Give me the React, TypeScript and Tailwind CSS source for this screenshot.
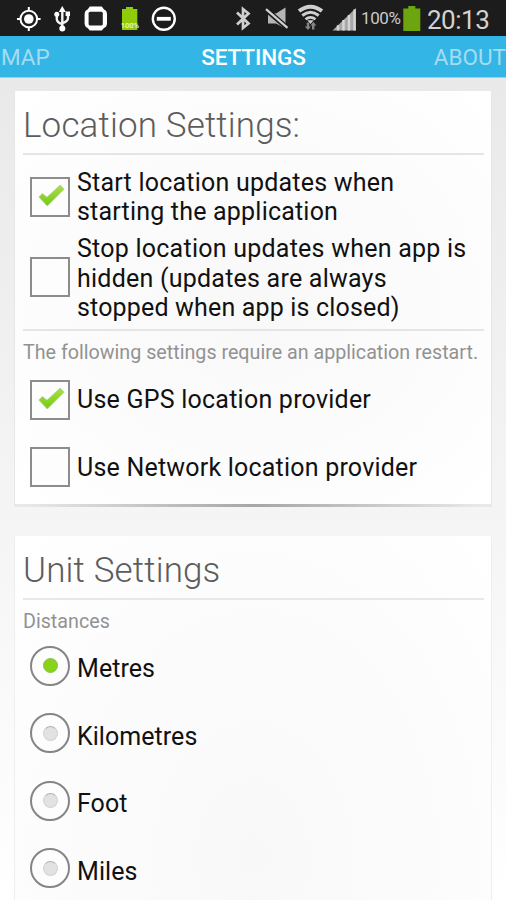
import { useState } from "react";
import clsx from "clsx";

const distances = ["Metres", "Kilometres", "Foot", "Miles"];

function NotificationIcons() {
  return (
    <div className="flex">
      {/* GPS */}
      <svg className="ml-[16px] h-9 w-[26px]" viewBox="16 0 26 36" fill="none" stroke="#fff">
        <circle cx="28.8" cy="19" r="8.3" strokeWidth="2" />
        <circle cx="28.8" cy="19" r="4.8" fill="#fff" stroke="none" />
        <path d="M28.8 7v4M28.8 27v4M17 19h4M36.6 19h4" strokeWidth="2" />
      </svg>
      {/* USB */}
      <svg className="ml-[11px] h-9 w-[19px]" viewBox="53 0 19 36" fill="none" stroke="#f4f4f4">
        <path d="M62.3 10v18M56.8 15v4.2q0 3 5.5 5M68 14v4.2q0 3-5.7 5" strokeWidth="2.4" />
        <path d="M62.3 6l3.5 6h-7z" fill="#fff" stroke="none" />
        <circle cx="56.8" cy="14.3" r="2.5" fill="#fff" stroke="none" />
        <path d="M65.6 11.5h4.400v4.500h-4.400z" fill="#fff" stroke="none" />
        <circle cx="62.3" cy="28.5" r="3" fill="#fff" stroke="none" />
      </svg>
      {/* Watch */}
      <svg className="ml-[11px] h-9 w-[26px]" viewBox="83 0 26 36">
        <path
          d="M89.8 6.500h12l2.200 3q3 1.200 3 5v8.500q0 3.800-3 5l-2.200 2.500h-12l-2.200-2.500q-3-1.200-3-5v-8.500q0-3.800 3-5z"
          fill="#fff"
        />
        <rect x="88.600" y="11.800" width="14.200" height="13.700" rx="1.500" fill="#222" />
      </svg>
      {/* Battery notification */}
      <svg className="ml-[11px] h-9 w-[20px]" viewBox="120 0 20 36">
        <path d="M122 9h4V7h7v2h4.3v21H122z" fill="#8fcb0b" />
        <text
          x="129.8"
          y="28.3"
          textAnchor="middle"
          fontFamily="Roboto, sans-serif"
          fontSize="7.4"
          fontWeight="700"
          fill="#e4f2c4"
        >
          100%
        </text>
      </svg>
      {/* Blocking mode */}
      <svg className="ml-[10px] h-9 w-[28px]" viewBox="150 0 28 36">
        <circle cx="163.8" cy="18.8" r="11" fill="none" stroke="#fff" strokeWidth="2.4" />
        <rect x="156.8" y="16.900" width="14" height="3.800" fill="#fff" />
      </svg>
    </div>
  );
}

function SystemIcons() {
  return (
    <div className="ml-auto flex">
      {/* Bluetooth */}
      <svg className="h-9 w-[18px]" viewBox="235 0 18 36" fill="none" stroke="#cfcfcf">
        <path d="M237 12.500l11.500 11-5.500 4.500V9l5.500 4.500L237 24.500" strokeWidth="2.700" />
      </svg>
      {/* Muted */}
      <svg className="ml-[12px] h-9 w-[26px]" viewBox="265 0 26 36">
        <path d="M268 13.500h8l9.500-6v21l-9.500-5H268z" fill="#b5b5b5" />
        <path d="M265.500 9l23 20" stroke="#1c1c1c" strokeWidth="5" />
        <path d="M266 9.200l21.500 18.600" stroke="#d0d0d0" strokeWidth="2.200" />
      </svg>
      {/* Wi-Fi */}
      <svg className="ml-[6px] h-9 w-[28px]" viewBox="297 0 28 36" fill="none" stroke="#cfcfcf">
        <path d="M299 11q11.500-8.500 23 0" strokeWidth="4" />
        <path d="M302.300 15.500q8.200-6.500 16.400 0" strokeWidth="3" />
        <path d="M305.500 19.300q5-4 10 0" strokeWidth="2.600" />
        <path d="M307.300 20.300h6.400l-3.200 3.600z" fill="#cfcfcf" stroke="none" />
        <path d="M308 22.500v6M313.200 29.500v-6" stroke="#858585" strokeWidth="2.400" />
        <path d="M304.800 26.500h6l-2.800 3.500zM310.400 25.500h6l-3-3.500z" fill="#858585" stroke="none" />
      </svg>
      {/* Signal */}
      <svg className="ml-[6px] h-9 w-[26px]" viewBox="331 0 26 36">
        <path d="M332.500 30.500L356 8v22.500z" fill="#a8a8a8" />
        <path d="M338 25.200v5.300M343.500 20v10.500M349 15v15.500M354.500 9.500v21" stroke="#d6d6d6" strokeWidth="2.400" />
      </svg>
      <span className="ml-[4px] w-[41px] text-[17px] leading-9 tracking-[-0.400px] text-[#c9c9c9]">100%</span>
      <svg className="ml-px h-9 w-[18px]" viewBox="403 0 18 36">
        <path d="M403.300 8.500h5V6h7v2.500h5V31h-17z" fill="#6da50e" />
      </svg>
      <span className="ml-[6px] w-[79px] pt-[2px] text-[26px] leading-9 tracking-[-0.500px] text-[#d2d2d2]">20:13</span>
    </div>
  );
}

function TabBar() {
  return (
    <nav className="grid h-[42px] grid-cols-3 border-b border-[#8fd3ee] bg-[#33b5e5] pt-px text-[22.500px] leading-[40px] text-[#a5dcf1]">
      <span className="pl-px">MAP</span>
      <span className="pl-px text-center font-medium tracking-[-0.100px] whitespace-nowrap text-white">SETTINGS</span>
      <span className="justify-self-end whitespace-nowrap">ABOUT</span>
    </nav>
  );
}

function Checkbox({ defaultChecked = false }) {
  const [checked, setChecked] = useState(defaultChecked);

  return (
    <button
      role="checkbox"
      aria-checked={checked}
      onClick={() => setChecked(!checked)}
      className="h-10 w-10 shrink-0 border-2 border-[#8c8c8c] bg-[#fdfdfd]"
    >
      {checked && (
        <svg className="h-9 w-9" viewBox="0 0 36 36">
          <defs>
            <linearGradient id="tick" x1="0" y1="0" x2="0" y2="1">
              <stop offset="0" stopColor="#aadf45" />
              <stop offset="1" stopColor="#73cb10" />
            </linearGradient>
          </defs>
          <path
            d="M6.800 18l3.600-3.500 4.600 3.700L28.200 6l3.900 4.200L15.300 27z"
            fill="url(#tick)"
            stroke="#b6c99a"
            strokeWidth=".8"
            strokeLinejoin="round"
          />
        </svg>
      )}
    </button>
  );
}

function Radio({ selected, onSelect }: { selected: boolean; onSelect: () => void }) {
  return (
    <button
      role="radio"
      aria-checked={selected}
      onClick={onSelect}
      className="flex h-10 w-10 shrink-0 items-center justify-center rounded-full border-2 border-[#858585] bg-[#fdfdfd]"
    >
      <span
        className={clsx(
          "h-[15px] w-[15px] rounded-full border",
          selected ? "border-[#8fbe4d] bg-[#86d318]" : "border-[#d3d3d3] border-t-[#b3b3b3] bg-[#e2e2e2]"
        )}
      />
    </button>
  );
}

export default function App() {
  const [unit, setUnit] = useState("Metres");

  return (
    <div className="flex h-[900px] w-[506px] flex-col overflow-hidden bg-linear-to-b from-[#e7e7e7] to-white font-['Roboto',sans-serif] text-[#111]">
      <header className="flex h-9 shrink-0 bg-[#1c1c1c]">
        <NotificationIcons />
        <SystemIcons />
      </header>
      <TabBar />

      <main className="px-[14px] pt-[13px]">
        <section className="h-[413px] border-x border-[#e6e6e6] bg-radial from-[#f8f8f8] to-white pr-[7px] pl-[8px]">
          <h1 className="h-[64px] border-b-2 border-[#e5e5e5] pt-[13px] text-[35px] leading-[44px] font-light tracking-[0.150px] text-[#5c5c5c]">
            Location Settings:
          </h1>
          <div className="mt-[12px] flex h-[60px] items-center gap-[7px] pl-[7px] text-[25px] leading-[29.500px]">
            <Checkbox defaultChecked />
            <p className="whitespace-nowrap">
              <span className="block tracking-[0.220px]">Start location updates when</span>
              <span className="block tracking-[0.200px]">starting the application</span>
            </p>
          </div>
          <div className="mt-[6px] flex h-[87px] items-center gap-[7px] pl-[7px] text-[25px] leading-[29.500px]">
            <Checkbox />
            <p className="pt-[4px] whitespace-nowrap">
              <span className="block tracking-[0.240px]">Stop location updates when app is</span>
              <span className="block tracking-[0.230px]">hidden (updates are always</span>
              <span className="block tracking-[0.170px]">stopped when app is closed)</span>
            </p>
          </div>
          <p className="mt-[9px] h-[37px] border-t-2 border-[#e5e5e5] pt-[8px] text-[19.700px] leading-[28px] whitespace-nowrap text-[#929292]">
            The following settings require an application restart.
          </p>
          <div className="flex h-[67px] items-center gap-[7px] pl-[7px] text-[25px] whitespace-nowrap">
            <Checkbox defaultChecked />
            <span className="tracking-[0.230px]">Use GPS location provider</span>
          </div>
          <div className="flex h-[68px] items-center gap-[7px] pl-[7px] text-[25px] whitespace-nowrap">
            <Checkbox />
            <span className="pt-px tracking-[0.210px]">Use Network location provider</span>
          </div>
        </section>
        <div className="h-[3px] bg-linear-to-r from-[#e8e8e8] from-3% via-[#a6a6a6] via-50% to-[#e8e8e8] to-97%" />

        <section className="mt-[29px] h-[400px] rounded-t-xs border-x border-[#eee] bg-radial-[at_50%_80%] from-[#f8f8f8] to-white pr-[7px] pl-[8px]">
          <h1 className="h-[64px] border-b-2 border-[#e8e8e8] pt-[13px] text-[35px] leading-[44px] font-light tracking-[0.150px] text-[#5c5c5c]">
            Unit Settings
          </h1>
          <h2 className="h-[32px] pt-[8px] text-[19.700px] leading-[28px] text-[#929292]">Distances</h2>
          <div role="radiogroup">
            {distances.map((name) => (
              <div key={name} className="flex h-[67.500px] items-center gap-[7px] pl-[7px] text-[25px]">
                <Radio selected={unit === name} onSelect={() => setUnit(name)} />
                <span className="pt-[6px] tracking-[0.050px]">{name}</span>
              </div>
            ))}
          </div>
        </section>
      </main>
    </div>
  );
}
